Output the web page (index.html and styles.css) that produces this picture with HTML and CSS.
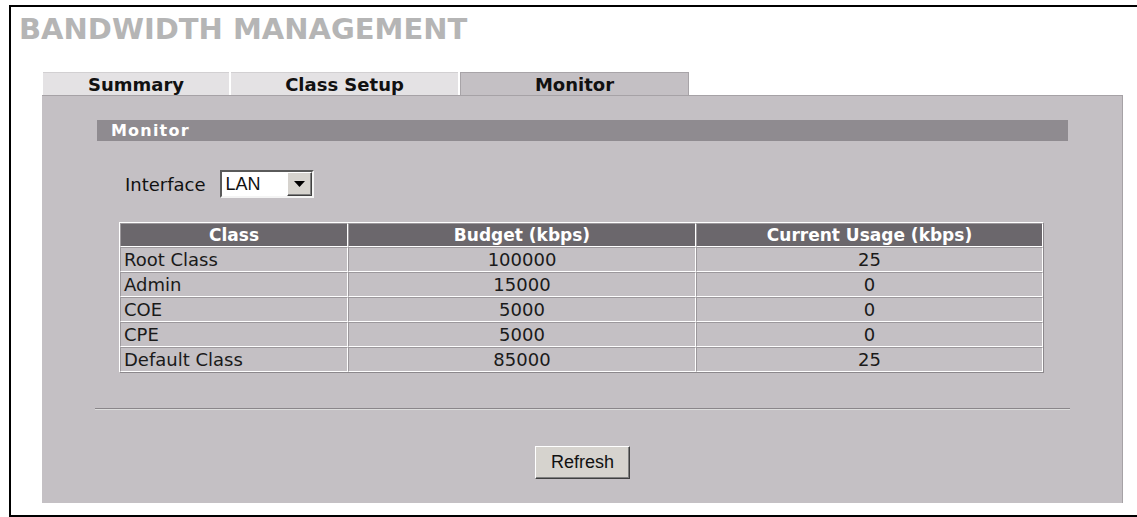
FILE: index.html
```html
<!DOCTYPE html>
<html lang="en">
<head>
    <meta charset="UTF-8">
    <title>Bandwidth Management - Monitor</title>
    <link rel="stylesheet" href="styles.css">
</head>
<body>
    <div class="frame">
        <h1 class="title">BANDWIDTH MANAGEMENT</h1>

        <div class="tabs">
            <div class="tab tab-summary">Summary</div>
            <div class="tab tab-setup">Class Setup</div>
            <div class="tab tab-monitor active">Monitor</div>
        </div>

        <div class="panel">
            <div class="section">
                <div class="section-bar">Monitor</div>

                <div class="iface-row">
                    <span class="iface-label">Interface</span>
                    <div class="select">
                        <span class="select-value">LAN</span>
                        <span class="select-arrow">
                            <svg width="11" height="6" viewBox="0 0 11 6"><path d="M0 0h11L5.5 6z" fill="#000"/></svg>
                        </span>
                    </div>
                </div>

                <table class="monitor-table">
                    <thead>
                        <tr>
                            <th class="col-class">Class</th>
                            <th class="col-budget">Budget (kbps)</th>
                            <th class="col-usage">Current Usage (kbps)</th>
                        </tr>
                    </thead>
                    <tbody>
                        <tr><td>Root Class</td><td class="num">100000</td><td class="num">25</td></tr>
                        <tr><td>Admin</td><td class="num">15000</td><td class="num">0</td></tr>
                        <tr><td>COE</td><td class="num">5000</td><td class="num">0</td></tr>
                        <tr><td>CPE</td><td class="num">5000</td><td class="num">0</td></tr>
                        <tr><td>Default Class</td><td class="num">85000</td><td class="num">25</td></tr>
                    </tbody>
                </table>
            </div>

            <div class="divider"></div>

            <div class="actions">
                <button class="button" type="button">Refresh</button>
            </div>
        </div>
    </div>
</body>
</html>
```

FILE: styles.css
```css
:root {
    --panel-bg: #c4c0c4;
    --bar-bg: #8f8b90;
    --head-bg: #6b676c;
    --tab-light: #e4e2e4;
    --btn-face: #d6d3ce;
}

* {
    box-sizing: border-box;
    margin: 0;
    padding: 0;
}

body {
    font-family: "DejaVu Sans", Verdana, sans-serif;
    background: #fff;
    color: #111;
    overflow: hidden;
    padding-top: 5px;
}

.frame {
    margin-left: 9px;
    margin-right: -30px;
    border: 2px solid #000;
    border-right: none;
    padding: 5px 0 12px 0;
}

.title {
    font-size: 29px;
    font-weight: bold;
    line-height: 34px;
    color: #b5b5b5;
    padding-left: 8px;
}

/* tabs */
.tabs {
    display: flex;
    gap: 2px;
    margin: 26px 0 0 32px;
    height: 23px;
}

.tab {
    font-size: 18px;
    font-weight: bold;
    line-height: 24px;
    text-align: center;
    color: #111;
    background: var(--tab-light);
    border-top: 1px solid #d2d0d2;
}

.tab-summary { width: 186px; }
.tab-setup { width: 227px; }
.tab-monitor { width: 229px; }

.tab.active {
    background: var(--panel-bg);
    border: 1px solid #a8a4a8;
    border-bottom: none;
}

/* main grey panel */
.panel {
    margin-left: 31px;
    width: 1081px;
    background: var(--panel-bg);
    border-top: 1px solid #a6a2a6;
    border-right: 1px solid #a6a2a6;
    padding: 24px 54px 24px 55px;
}

.section-bar {
    background: var(--bar-bg);
    color: #fff;
    font-size: 16px;
    font-weight: bold;
    letter-spacing: 1.2px;
    line-height: 21px;
    padding-left: 14px;
}

.iface-row {
    display: flex;
    align-items: center;
    gap: 14px;
    margin: 29px 0 0 28px;
}

.iface-label {
    font-size: 18px;
}

.select {
    display: flex;
    align-items: center;
    width: 94px;
    height: 28px;
    background: #fff;
    border: 2px solid;
    border-color: #5a5a5a #f4f4f4 #f4f4f4 #5a5a5a;
}

.select-value {
    flex: 1;
    font: 18px "Liberation Sans", Arial, sans-serif;
    padding-left: 4px;
}

.select-arrow {
    display: flex;
    align-items: center;
    justify-content: center;
    width: 25px;
    height: 100%;
    background: var(--btn-face);
    border: 1px solid;
    border-color: #fff #404040 #404040 #fff;
    box-shadow: inset -1px -1px 0 #808080;
}

/* table */
.monitor-table {
    margin: 24px 0 0 22px;
    width: 925px;
    border-collapse: separate;
    border-spacing: 0;
    border: 1px solid;
    border-color: #fff #8c888c #8c888c #fff;
    font-size: 18px;
}

.monitor-table th,
.monitor-table td {
    border: 1px solid;
    border-color: #9c989c #fff #fff #9c989c;
    height: 25px;
    padding: 0 3px;
    line-height: 21px;
}

.monitor-table th {
    background: var(--head-bg);
    color: #fff;
    font-size: 17px;
    font-weight: bold;
    height: 24px;
}

.col-class { width: 228px; }
.col-budget { width: 348px; }

.monitor-table td {
    color: #1a1a1a;
}

.monitor-table td.num {
    text-align: center;
}

.divider {
    margin: 35px -2px 0 -2px;
    border-top: 1px solid #8a868a;
    border-bottom: 1px solid #ddd;
}

.actions {
    display: flex;
    justify-content: center;
    margin-top: 36px;
}

.button {
    width: 95px;
    height: 33px;
    font: 18px "Liberation Sans", Arial, sans-serif;
    color: #111;
    background: var(--btn-face);
    border: 1px solid;
    border-color: #fff #404040 #404040 #fff;
    box-shadow: inset -1px -1px 0 #808080;
    cursor: pointer;
}
```
